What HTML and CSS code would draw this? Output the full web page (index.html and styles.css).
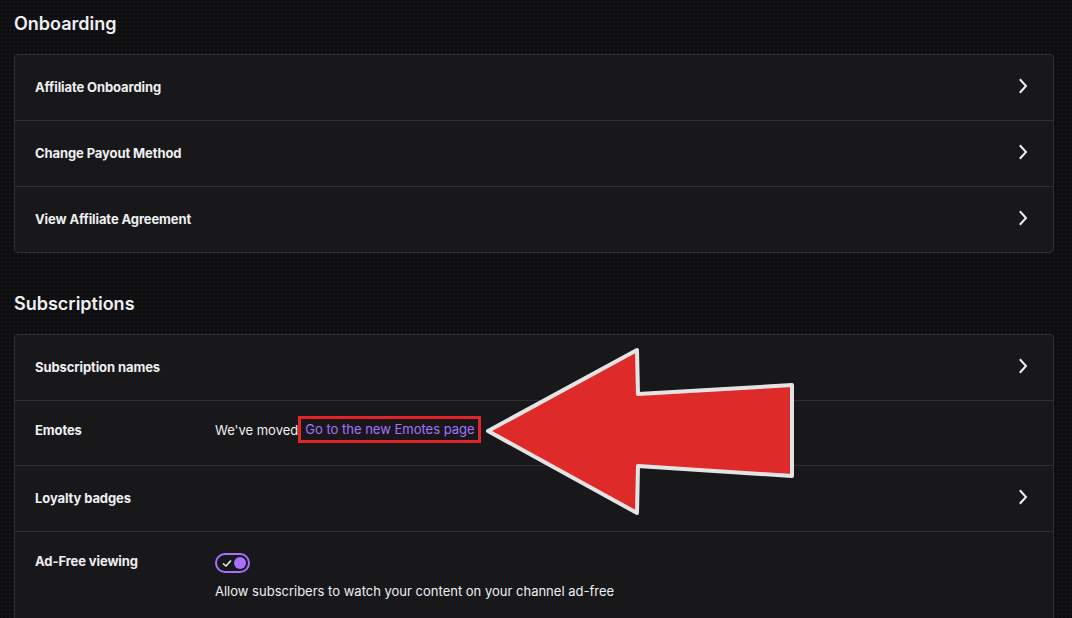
FILE: index.html
```html
<!DOCTYPE html>
<html lang="en">
<head>
<meta charset="utf-8">
<title>Affiliate settings</title>
<link rel="stylesheet" href="styles.css">
</head>
<body>
<main class="page">
  <section class="section">
    <h2 class="section-title">Onboarding</h2>
    <div class="card">
      <div class="row row-link">
        <span class="label">Affiliate Onboarding</span>
        <svg class="chev" viewBox="0 0 20 20" width="20" height="20"><polyline points="7.5,4 13,10 7.5,16" fill="none" stroke="#efeff1" stroke-width="2" stroke-linecap="square"/></svg>
      </div>
      <div class="row row-link">
        <span class="label">Change Payout Method</span>
        <svg class="chev" viewBox="0 0 20 20" width="20" height="20"><polyline points="7.5,4 13,10 7.5,16" fill="none" stroke="#efeff1" stroke-width="2" stroke-linecap="square"/></svg>
      </div>
      <div class="row row-link">
        <span class="label">View Affiliate Agreement</span>
        <svg class="chev" viewBox="0 0 20 20" width="20" height="20"><polyline points="7.5,4 13,10 7.5,16" fill="none" stroke="#efeff1" stroke-width="2" stroke-linecap="square"/></svg>
      </div>
    </div>
  </section>

  <section class="section">
    <h2 class="section-title">Subscriptions</h2>
    <div class="card">
      <div class="row row-link">
        <span class="label">Subscription names</span>
        <svg class="chev" viewBox="0 0 20 20" width="20" height="20"><polyline points="7.5,4 13,10 7.5,16" fill="none" stroke="#efeff1" stroke-width="2" stroke-linecap="square"/></svg>
      </div>
      <div class="row row-split row-emotes">
        <span class="label label-col">Emotes</span>
        <div class="value-col value-inline">
          <span class="text">We've moved</span>
          <a class="moved-link" href="#">Go to the new Emotes page</a>
        </div>
      </div>
      <div class="row row-link">
        <span class="label">Loyalty badges</span>
        <svg class="chev" viewBox="0 0 20 20" width="20" height="20"><polyline points="7.5,4 13,10 7.5,16" fill="none" stroke="#efeff1" stroke-width="2" stroke-linecap="square"/></svg>
      </div>
      <div class="row row-split row-top">
        <span class="label label-col">Ad-Free viewing</span>
        <div class="value-col">
          <span class="toggle">
            <svg class="toggle-check" viewBox="0 0 12 12" width="12" height="12"><polyline points="2,6.5 5,9 10,3.5" fill="none" stroke="#efeff1" stroke-width="1.6"/></svg>
            <span class="toggle-knob"></span>
          </span>
          <p class="desc">Allow subscribers to watch your content on your channel ad-free</p>
        </div>
      </div>
    </div>
  </section>

  <svg class="arrow" viewBox="0 0 1072 618" width="1072" height="618" aria-hidden="true">
    <polygon points="488,431 637,350 638,394 792,385 792,476 638,466 637,513" fill="#df2a2a" stroke="#e4e4e4" stroke-width="4" stroke-linejoin="round"/>
  </svg>
</main>
</body>
</html>
```

FILE: styles.css
```css
* { box-sizing: border-box; }

html, body {
  margin: 0;
  padding: 0;
}

body {
  background-color: #0e0e10;
  background-image: radial-gradient(circle, #1b1b1f 0.6px, transparent 0.9px);
  background-size: 4px 4px;
  color: #efeff1;
  font-family: Inter, "Noto Sans", "Liberation Sans", sans-serif;
  font-size: 13px;
  overflow: hidden;
}

.page {
  position: relative;
  width: 1072px;
  height: 618px;
  padding: 12px 18px 0 14px;
}

.section {
  display: flex;
  flex-direction: column;
}

.section + .section {
  margin-top: 39px;
}

.section-title {
  margin: 0 0 18px 0;
  font-size: 18px;
  line-height: 24px;
  font-weight: 600;
  color: #efeff1;
}

.card {
  background: #18181b;
  border: 1px solid #2f2f33;
  border-radius: 4px;
}

.row {
  box-sizing: content-box;
  display: flex;
  padding: 0 20px;
  border-top: 1px solid #2f2f33;
}

.row:first-child {
  border-top: none;
}

.row-link {
  height: 65px;
  align-items: center;
  justify-content: space-between;
  padding-bottom: 1px;
  height: 64px;
}

.row-emotes {
  height: 57px;
  align-items: center;
  padding-bottom: 7px;
}

.row-top {
  align-items: flex-start;
  padding-top: 20px;
  padding-bottom: 30px;
}

.label {
  font-weight: 700;
  font-size: 13px;
  line-height: 18px;
  color: #efeff1;
  letter-spacing: -0.1px;
}

.label-col {
  width: 180px;
  flex-shrink: 0;
}

.value-col {
  display: flex;
  flex-direction: column;
  align-items: flex-start;
}

.value-inline {
  flex-direction: row;
  align-items: center;
}

.text {
  line-height: 18px;
  margin-top: 1px;
}

.moved-link {
  margin-left: 0;
  padding: 0 3px 0 4px;
  border: 3px solid #e0262a;
  color: #a970ff;
  text-decoration: none;
  line-height: 21px;
}

.chev {
  display: block;
  flex-shrink: 0;
  margin-top: -2px;
}

.toggle {
  position: relative;
  display: flex;
  align-items: center;
  justify-content: space-between;
  width: 35px;
  height: 20px;
  margin-top: 1px;
  padding: 0 2px 0 4px;
  border: 2px solid #a970ff;
  border-radius: 10px;
}

.toggle-check {
  display: block;
}

.toggle-knob {
  width: 12px;
  height: 12px;
  border-radius: 50%;
  background: #a970ff;
}

.desc {
  margin: 9px 0 0 0;
  line-height: 18px;
  color: #efeff1;
}

.arrow {
  position: absolute;
  left: 0;
  top: 0;
  pointer-events: none;
}
```
